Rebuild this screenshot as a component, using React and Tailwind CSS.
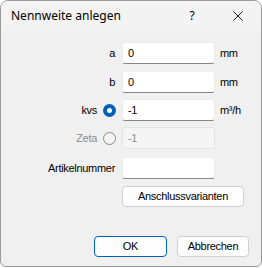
export default function App() {
  const font = { fontFamily: '"Noto Sans", "Open Sans", sans-serif' };
  return (
    <div className="w-[262px] h-[268px] bg-white" style={font}>
      <div className="w-[262px] h-[267px] bg-[#f0f0f0] border border-[#9a9a9a] rounded-t-[8px] rounded-b-[6px] overflow-hidden flex flex-col">
        {/* title bar */}
        <div className="h-[30px] shrink-0 bg-[#f3f3f3] flex items-center text-[12px] text-black">
          <span className="ml-[10px] flex-1">Nennweite anlegen</span>
          <span className="w-[46px] text-center">?</span>
          <span className="w-[46px] flex justify-center">
            <svg width="10" height="10" viewBox="0 0 10 10" stroke="#1a1a1a" strokeWidth="1">
              <path d="M0.5 0.5 L9.5 9.5 M9.5 0.5 L0.5 9.5" />
            </svg>
          </span>
        </div>

        {/* form */}
        <div className="flex flex-col pt-[11px] text-[11px] tracking-[-0.3px] text-black font-['Liberation_Sans',Arial,sans-serif]">
          <Row label="a" value="0" unit="mm" />
          <Row label="b" value="0" unit="mm" className="mt-[7px]" />
          <Row label="kvs" value="-1" unit="m³/h" radio="on" className="mt-[6px]" />
          <Row label="Zeta" value="-1" radio="off" disabled className="mt-[6px]" />
          <Row label="Artikelnummer" value="" className="mt-[8px]" />
          <div className="flex mt-[7px]">
            <button className="ml-[121px] w-[122px] h-[21px] bg-[#fdfdfd] border border-[#d0d0d0] rounded-[4px] leading-none text-black">
              Anschlussvarianten
            </button>
          </div>
        </div>

        <div className="flex mt-auto mb-[9px] text-[11px] tracking-[-0.3px] font-['Liberation_Sans',Arial,sans-serif]">
          <button className="ml-[93px] w-[73px] h-[21px] bg-[#fdfdfd] border border-[#005fb8] rounded-[4px] leading-none text-black">
            OK
          </button>
          <button className="ml-[10px] w-[72px] h-[21px] bg-[#fdfdfd] border border-[#d0d0d0] rounded-[4px] leading-none text-black">
            Abbrechen
          </button>
        </div>
      </div>
    </div>
  );
}

function Row({ label, value, unit, radio, disabled, className = "" }) {
  return (
    <div className={"flex items-center h-[22px] " + className}>
      <div className="w-[114px] flex items-center justify-end">
        <span className={disabled ? "text-[#8d8d8d]" : "text-black"}>{label}</span>
        {radio && (
          <span className="ml-[6px] mr-[-1px] w-[13px] h-[13px] flex items-center justify-center">
            {radio === "on" ? (
              <span className="w-[13px] h-[13px] rounded-full bg-[#005fb8] flex items-center justify-center">
                <span className="w-[5px] h-[5px] rounded-full bg-white" />
              </span>
            ) : (
              <span className="w-[13px] h-[13px] rounded-full border border-[#8a8a8a] bg-[#f5f5f5]" />
            )}
          </span>
        )}
      </div>
      <div
        className={
          "ml-[7px] w-[93px] h-[22px] rounded-[3px] flex items-center px-[5px] " +
          (disabled
            ? "bg-[#f5f5f5] border border-[#e3e3e3] text-[#8d8d8d]"
            : "bg-white border border-[#ececec] border-b-[#868686]")
        }
      >
        {value}
      </div>
      {unit && <span className="ml-[5px]">{unit}</span>}
    </div>
  );
}
